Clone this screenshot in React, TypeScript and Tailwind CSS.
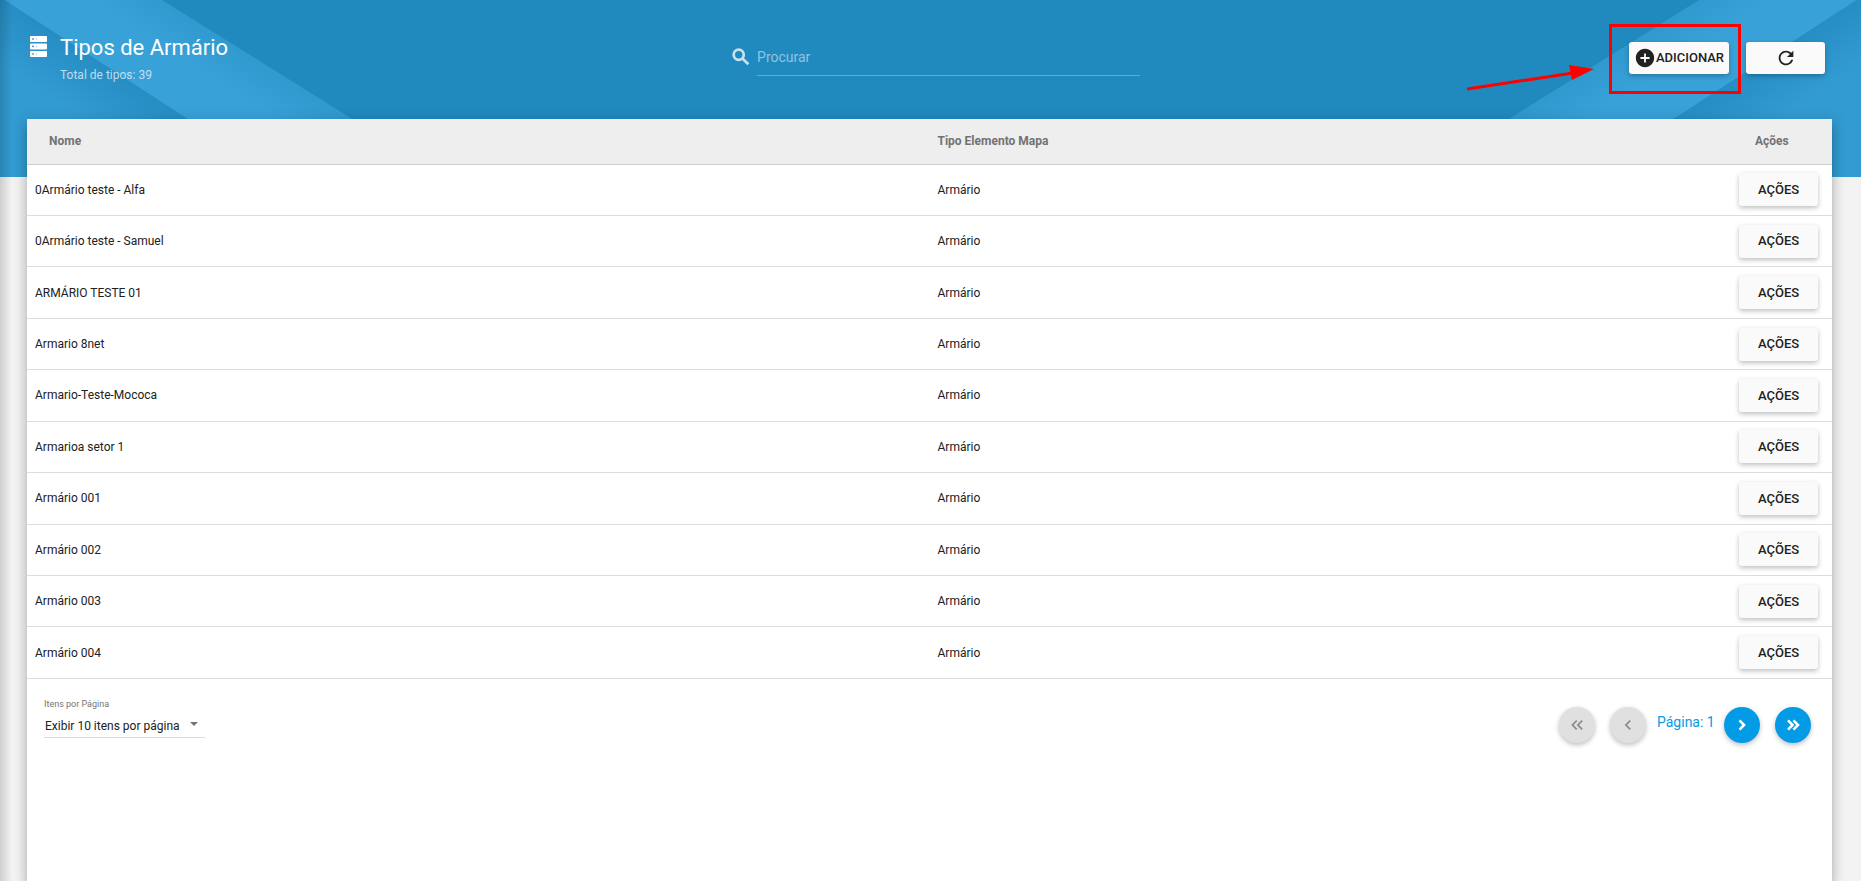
import {
  MdAddCircle,
  MdKeyboardDoubleArrowLeft,
  MdChevronLeft,
  MdRefresh,
} from 'react-icons/md'

const tipos = [
  '0Armário teste - Alfa',
  '0Armário teste - Samuel',
  'ARMÁRIO TESTE 01',
  'Armario 8net',
  'Armario-Teste-Mococa',
  'Armarioa setor 1',
  'Armário 001',
  'Armário 002',
  'Armário 003',
  'Armário 004',
]

const raised =
  'rounded-[3px] bg-[#fafafa] text-[13px] font-medium text-[#212121] shadow-[0_2px_5px_rgba(0,0,0,0.26)]'

const round = 'flex size-9 items-center justify-center rounded-full shadow-[0_2px_5px_rgba(0,0,0,0.26)]'

// heavier strokes than the stock Material glyphs
function BoldIcon({ d, className }: { d: string; className: string }) {
  return (
    <svg className={className} viewBox="0 0 24 24" fill="none" stroke="currentColor" strokeWidth="3" aria-hidden="true">
      <path d={d} />
    </svg>
  )
}

function ServerIcon() {
  return (
    <svg className="mt-1 h-[21px] w-[17px] shrink-0" viewBox="0 0 17 21" aria-hidden="true">
      {[0, 7.5, 15].map((y) => (
        <g key={y}>
          <rect y={y} width="17" height="6" rx="0.8" fill="#fff" />
          <rect x="2" y={y + 2.3} width="2" height="1.3" fill="#3f8fd0" />
          <rect x="6" y={y + 2.3} width="0.8" height="1.3" fill="#8cc4e8" />
        </g>
      ))}
    </svg>
  )
}

function Stripes({ id, className }: { id: string; className: string }) {
  return (
    <svg className={className} viewBox="0 0 450 177" width="450" height="177" aria-hidden="true">
      <defs>
        <linearGradient id={`${id}-band`} gradientUnits="userSpaceOnUse" x1="221" y1="37" x2="184" y2="94">
          <stop offset="0" stopColor="#3099ce" />
          <stop offset="0.6" stopColor="#38a1d8" />
        </linearGradient>
        <linearGradient id={`${id}-base`} gradientUnits="userSpaceOnUse" x1="99" y1="59" x2="66" y2="109">
          <stop offset="0" stopColor="#268dc3" />
          <stop offset="1" stopColor="#329bd1" />
        </linearGradient>
      </defs>
      <path d="M0 0H162L445 177H0Z" fill={`url(#${id}-band)`} />
      <path d="M0 -3L277 177H0Z" fill={`url(#${id}-base)`} />
    </svg>
  )
}

function Header() {
  return (
    <header className="relative h-[177px] overflow-hidden bg-[#2089be] text-white">
      <Stripes id="left" className="absolute left-0 top-0" />
      <Stripes id="right" className="absolute right-0 top-0 -scale-x-100" />

      <div className="relative flex pl-[30px] pr-9 pt-8">
        <div className="flex w-[39%] gap-[13px]">
          <ServerIcon />
          <div>
            <h1 className="text-[22px] leading-8">Tipos de Armário</h1>
            <p className="text-xs leading-[22px] text-white/70">Total de tipos: 39</p>
          </div>
        </div>

        <div className="mt-2 flex w-[410px] items-start">
          <label htmlFor="procurar" aria-label="Procurar" className="w-[27px] shrink-0 pt-[6px]">
            <BoldIcon
              className="size-[22px] text-white/75"
              d="M9.5 4a5.5 5.5 0 1 0 0 11a5.5 5.5 0 1 0 0-11zM13.6 13.6L20 20"
            />
          </label>
          <input
            id="procurar"
            type="text"
            placeholder="Procurar"
            className="h-9 min-w-0 flex-1 border-b border-[#5cabdb] bg-transparent pb-[2px] text-sm outline-none placeholder:text-white/50"
          />
        </div>

        <div className="ml-auto mt-[10px] flex items-start gap-[17px]">
          <div className="relative">
            <button type="button" className={`${raised} flex h-8 w-[100px] items-center justify-center`}>
              <MdAddCircle className="size-[22px] shrink-0" />
              ADICIONAR
            </button>
            <div className="pointer-events-none absolute -bottom-5 -left-5 -right-3 -top-[18px] border-[3px] border-[#fe0000]" />
            <svg
              className="pointer-events-none absolute right-full top-5 mr-[35px]"
              width="127"
              height="32"
              viewBox="0 0 127 32"
              aria-hidden="true"
            >
              <path d="M0 27L106 11" stroke="#fe0000" strokeWidth="3" />
              <path d="M102 3L127 7L105 18Z" fill="#fe0000" />
            </svg>
          </div>
          <button
            type="button"
            aria-label="Atualizar"
            className={`${raised} flex h-8 w-[79px] items-center justify-center`}
          >
            <MdRefresh className="size-[22px]" />
          </button>
        </div>
      </div>
    </header>
  )
}

function TiposTable() {
  return (
    <table className="h-[560px] w-full table-fixed border-collapse text-left text-xs">
      <thead>
        <tr className="h-[45px] border-b border-[#cfcfcf] bg-[#eeeeee] text-[#727272]">
          <th className="w-1/2 pl-[22px] font-bold">Nome</th>
          <th className="pl-2 font-bold">Tipo Elemento Mapa</th>
          <th className="w-[107px] pl-[30px] font-bold">Ações</th>
        </tr>
      </thead>
      <tbody>
        {tipos.map((nome) => (
          <tr key={nome} className="border-b border-[#dddddd] text-[#212121]">
            <td className="pl-2">{nome}</td>
            <td className="pl-2">Armário</td>
            <td className="pl-[14px]">
              <button type="button" className={`${raised} block h-[33px] w-[79px]`}>
                AÇÕES
              </button>
            </td>
          </tr>
        ))}
      </tbody>
    </table>
  )
}

function Pagination() {
  return (
    <div className="flex items-start justify-between pl-[17px] pr-[21px] pt-[18px]">
      <div className="w-[161px]">
        <label htmlFor="itens" className="block text-[9px] leading-[14px] text-[#757575]">
          Itens por Página
        </label>
        <div className="relative mt-[3px]">
          <select
            id="itens"
            className="block h-6 w-full appearance-none border-b border-[#dcdcdc] bg-transparent pl-px text-xs text-[#212121] outline-none"
          >
            <option>Exibir 10 itens por página</option>
          </select>
          <svg className="pointer-events-none absolute right-[7px] top-2" width="8" height="4" viewBox="0 0 8 4">
            <path d="M0 0H8L4 4Z" fill="#757575" />
          </svg>
        </div>
      </div>

      <nav aria-label="Paginação" className="flex pt-[10px]">
        <button type="button" disabled aria-label="Primeira página" className={`${round} bg-[#e0e0e0] text-[#8a8a8a]`}>
          <MdKeyboardDoubleArrowLeft className="size-5" />
        </button>
        <button
          type="button"
          disabled
          aria-label="Página anterior"
          className={`${round} ml-[15px] bg-[#e0e0e0] text-[#8a8a8a]`}
        >
          <MdChevronLeft className="size-5" />
        </button>
        <span className="w-[78px] pl-[11px] text-sm leading-[30px] text-[#039be5]">Página: 1</span>
        <button type="button" aria-label="Próxima página" className={`${round} bg-[#039be5] text-white`}>
          <BoldIcon className="size-5" d="M9 6.5L14.5 12L9 17.5" />
        </button>
        <button type="button" aria-label="Última página" className={`${round} ml-[15px] bg-[#039be5] text-white`}>
          <BoldIcon className="size-5" d="M6 6.5L11.5 12L6 17.5M12.5 6.5L18 12L12.5 17.5" />
        </button>
      </nav>
    </div>
  )
}

export default function App() {
  return (
    <div className="relative flex min-h-screen flex-col overflow-hidden bg-[#f3f3f3] font-['Roboto',sans-serif]">
      <Header />
      <div className="pointer-events-none absolute inset-y-0 left-0 w-3 bg-linear-to-r from-black/15 to-transparent" />
      <main className="relative -mt-[58px] ml-[27px] mr-[29px] flex-1 bg-white shadow-[0_5px_5px_-3px_rgba(0,0,0,0.2),0_8px_10px_1px_rgba(0,0,0,0.14),0_3px_14px_2px_rgba(0,0,0,0.12)]">
        <TiposTable />
        <Pagination />
      </main>
    </div>
  )
}
